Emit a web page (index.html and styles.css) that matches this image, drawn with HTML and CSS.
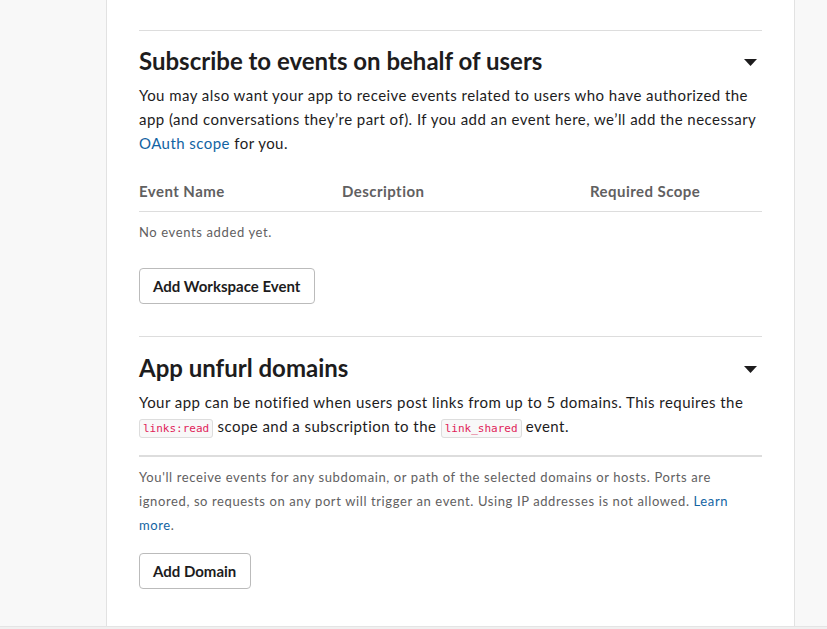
FILE: index.html
```html
<!DOCTYPE html>
<html lang="en">
<head>
  <meta charset="UTF-8">
  <title>Event Subscriptions</title>
  <link rel="stylesheet" href="styles.css">
</head>
<body>
<div class="card">

  <section class="section">
    <div class="section-head">
      <h2>Subscribe to events on behalf of users</h2>
      <svg class="caret" width="13" height="7" viewBox="0 0 13 7"><polygon points="0,0 13,0 6.5,7" fill="#1d1c1d"/></svg>
    </div>
    <p class="lead">You may also want your app to receive events related to users who have authorized the app (and conversations they’re part of). If you add an event here, we’ll add the necessary <a href="#">OAuth scope</a> for you.</p>

    <div class="events">
      <div class="events-head">
        <span>Event Name</span>
        <span>Description</span>
        <span>Required Scope</span>
      </div>
      <div class="events-empty">No events added yet.</div>
    </div>

    <button class="btn">Add Workspace Event</button>
  </section>

  <section class="section last">
    <div class="section-head">
      <h2>App unfurl domains</h2>
      <svg class="caret" width="13" height="7" viewBox="0 0 13 7"><polygon points="0,0 13,0 6.5,7" fill="#1d1c1d"/></svg>
    </div>
    <p class="lead">Your app can be notified when users post links from up to 5 domains. This requires the <code>links:read</code> scope and a subscription to the <code>link_shared</code> event.</p>

    <hr class="rule">

    <p class="note">You'll receive events for any subdomain, or path of the selected domains or hosts. Ports are ignored, so requests on any port will trigger an event. Using IP addresses is not allowed. <a href="#">Learn more</a>.</p>

    <button class="btn btn-small">Add Domain</button>
  </section>

</div>
<div class="page-end"></div>
</body>
</html>
```

FILE: styles.css
```css
body {
  margin: 0;
  background-color: #f8f8f8;
  font-family: Lato, "Noto Sans", sans-serif;
  color: #1d1c1d;
}

.card {
  margin-left: 106px;
  width: 623px;
  padding: 30px 32px 0 32px;
  background: white;
  border-left: 1px solid #e2e2e2;
  border-right: 1px solid #e2e2e2;
}

.section {
  border-top: 1px solid #dddddd;
  padding: 15px 0 32px 0;
}
.section.last {
  padding-bottom: 37px;
}
.section.last .section-head {
  margin-top: 1px;
}

.section-head {
  display: flex;
  justify-content: space-between;
  align-items: center;
  margin-bottom: 7px;
}
.section-head h2 {
  margin: 0;
  font-size: 24px;
  line-height: 30px;
  font-weight: 700;
}
.caret {
  margin: 3px 5px 0 0;
}

.lead {
  margin: 0;
  font-size: 15px;
  line-height: 24px;
  letter-spacing: 0.45px;
}

a {
  color: #1264a3;
  text-decoration: none;
}

code {
  font-family: "DejaVu Sans Mono", monospace;
  font-size: 11px;
  line-height: 1;
  letter-spacing: 0;
  color: #e01e5a;
  background: #f8f8f8;
  border: 1px solid #dddddd;
  border-radius: 3px;
  padding: 2px 3px;
}

.events {
  margin-top: 24px;
}
.events-head {
  display: grid;
  grid-template-columns: 203px 248px 1fr;
  padding-bottom: 8px;
  border-bottom: 1px solid #dddddd;
  font-size: 15px;
  line-height: 24px;
  font-weight: 700;
  letter-spacing: 0.45px;
  color: #616061;
}
.events-empty {
  padding-top: 10px;
  font-size: 13px;
  line-height: 20px;
  letter-spacing: 0.62px;
  color: #616061;
}

.btn {
  margin-top: 26px;
  height: 36px;
  padding: 0 14px 0 13px;
  font-family: Lato, "Noto Sans", sans-serif;
  font-size: 15px;
  font-weight: 700;
  color: #1d1c1d;
  background: white;
  border: 1px solid #bbbbbb;
  border-radius: 4px;
  cursor: pointer;
}
.btn-small {
  margin-top: 16px;
}

.rule {
  margin: 17px 0 0 0;
  border: none;
  height: 2px;
  background: #dddddd;
}

.note {
  margin: 0;
  padding-top: 8px;
  font-size: 13px;
  line-height: 24px;
  letter-spacing: 0.61px;
  color: #616061;
}

.page-end {
  height: 3px;
  border-top: 1px solid #e4e4e4;
  background: #f0f0f0;
}
```
